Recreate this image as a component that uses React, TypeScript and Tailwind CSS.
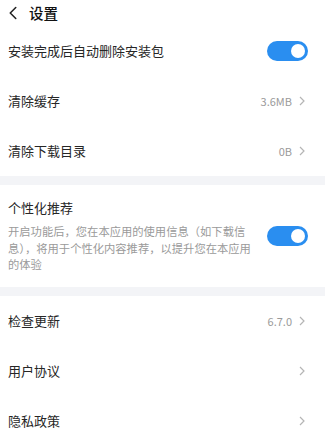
import { ChevronLeft } from 'lucide-react';

const font = { fontFamily: '"Noto Sans CJK SC", "Noto Sans", sans-serif' };

function Toggle({ className = '' }: { className?: string }) {
  return (
    <div className={`w-[41px] h-[20px] rounded-full bg-[#2a8ef0] flex items-center justify-end pr-[3px] shrink-0 ${className}`}>
      <div className="w-[14px] h-[14px] rounded-full bg-white" />
    </div>
  );
}

function Chevron() {
  return (
    <svg width="6" height="10" viewBox="0 0 6 10" className="ml-[7px]">
      <path d="M1 1l4 4-4 4" fill="none" stroke="#b5b5b5" strokeWidth="1.2" />
    </svg>
  );
}

function Row({ label, value }: { label: string; value?: string }) {
  return (
    <div className="h-[50px] flex items-center justify-between pl-[8px] pr-[20px]">
      <span className="text-[13px] text-[#262626]">{label}</span>
      <div className="flex items-center">
        {value && <span className="text-[11px] text-[#9a9a9a]">{value}</span>}
        <Chevron />
      </div>
    </div>
  );
}

export default function App() {
  return (
    <div className="w-[325px] h-[443px] bg-white overflow-hidden" style={font}>
      <div className="h-[26px] flex items-center pl-[2px]">
        <ChevronLeft className="w-[22px] h-[22px] text-[#222]" strokeWidth={1.7} />
        <span className="ml-[5px] text-[14.5px] font-medium text-[#111]">设置</span>
      </div>

      <div className="h-[50px] flex items-center justify-between pl-[8px] pr-[17px]">
        <span className="text-[13px] text-[#262626]">安装完成后自动删除安装包</span>
        <Toggle />
      </div>
      <Row label="清除缓存" value="3.6MB" />
      <Row label="清除下载目录" value="0B" />

      <div className="h-[9px] bg-[#f3f4f7]" />

      <div className="h-[102px] pl-[8px] pr-[17px] pt-[14px]">
        <div className="text-[13px] text-[#262626] leading-[18px]">个性化推荐</div>
        <div className="flex items-start justify-between mt-[6px]">
          <p className="w-[252px] text-[11.3px] leading-[16.5px] text-[#9a9a9a] whitespace-nowrap">
            开启功能后，您在本应用的使用信息（如下载信
            <br />
            息），将用于个性化内容推荐，以提升您在本应用
            <br />
            的体验
          </p>
          <Toggle className="mt-[3px]" />
        </div>
      </div>

      <div className="h-[9px] bg-[#f3f4f7]" />

      <Row label="检查更新" value="6.7.0" />
      <Row label="用户协议" />
      <Row label="隐私政策" />
    </div>
  );
}
